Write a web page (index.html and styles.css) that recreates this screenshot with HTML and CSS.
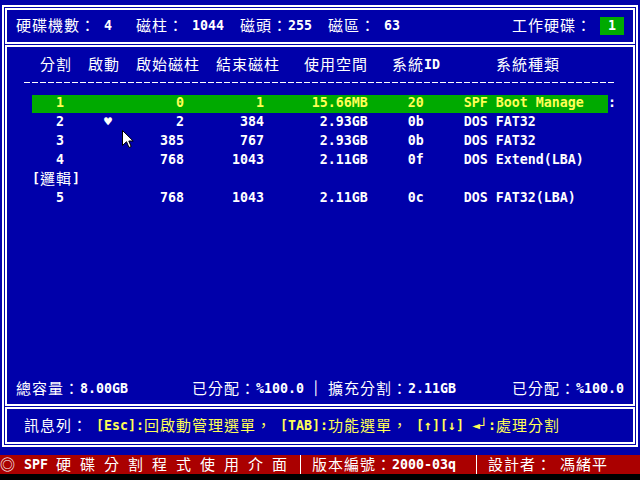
FILE: index.html
```html
<!DOCTYPE html>
<html>
<head>
<meta charset="utf-8">
<title>SPF</title>
<link rel="stylesheet" href="styles.css">
</head>
<body>
<div class="screen">
  <div class="frame">
    <div class="box head">
      <div class="line"> <span class="c">硬碟機數：</span> 4   <span class="c">磁柱：</span> 1044  <span class="c">磁頭：</span>255  <span class="c">磁區：</span> 63              <span class="c">工作硬碟：</span> <span class="disk">1</span></div>
    </div>
    <div class="box main">
      <div class="line cols">    <span class="c">分割</span>  <span class="c">啟動</span>  <span class="c">啟始磁柱</span>  <span class="c">結束磁柱</span>   <span class="c">使用空間</span>   <span class="c">系統</span>ID       <span class="c">系統種類</span></div>
      <div class="rule"></div>
      <div class="rows">
        <div class="sel"><div class="bar">   1              0         1      15.66MB     20     SPF Boot Manage</div><span class="mark">:</span></div>
        <div class="line">      2     ♥        2       384       2.93GB     0b     DOS FAT32</div>
        <div class="line">      3            385       767       2.93GB     0b     DOS FAT32</div>
        <div class="line">      4            768      1043       2.11GB     0f     DOS Extend(LBA)</div>
        <div class="line">   [<span class="c">邏輯</span>]</div>
        <div class="line">      5            768      1043       2.11GB     0c     DOS FAT32(LBA)</div>
      </div>
      <div class="line totals"> <span class="c">總容量：</span>8.00GB        <span class="c">已分配：</span>%100.0 │ <span class="c">擴充分割：</span>2.11GB       <span class="c">已分配：</span>%100.0</div>
    </div>
    <div class="box msg">
      <div class="line">  <span class="c">訊息列：</span><span class="y"> [Esc]:<span class="c">回啟動管理選單，</span> [TAB]:<span class="c">功能選單，</span> [↑][↓] ◄┘:<span class="c">處理分割</span></span></div>
    </div>
  </div>
  <div class="status"><span class="c">◎</span> SPF <span class="c sp">硬碟分割程式使用介面</span><span class="vl"></span> <span class="c">版本編號：</span>2000-03q  <span class="vl"></span> <span class="c">設計者：</span> <span class="c">馮緒平</span></div>
  <div class="black"></div>
  <svg class="cursor" width="12" height="19" viewBox="0 0 12 19"><path d="M0.5 0.5V15.5L4.5 11.7L7 17.5L9.2 16.5L6.8 11H11.2Z" fill="#fff" stroke="#000" stroke-width="1"/></svg>
</div>
</body>
</html>
```

FILE: styles.css
```css
body {
  margin: 0;
  background: #000;
}

.screen {
  width: 640px;
  height: 480px;
  background: #0000aa;
  position: relative;
  overflow: hidden;
  display: flex;
  flex-direction: column;
  font-family: "DejaVu Sans Mono", monospace;
  font-weight: bold;
  font-size: 13.29px;
  color: #fff;
}

.frame {
  box-sizing: border-box;
  margin: 5px 0 0 2px;
  width: 636px;
  height: 442px;
  border: 2px solid #fff;
  padding: 1px;
  display: flex;
  flex-direction: column;
  gap: 1px;
}

.box {
  box-sizing: border-box;
  border: 2px solid #fff;
  padding-left: 1px;
}

.head {
  height: 36px;
  line-height: 32px;
}

.main {
  height: 361px;
  padding-top: 8px;
  display: flex;
  flex-direction: column;
}

.msg {
  height: 37px;
  line-height: 33px;
}

.line {
  white-space: pre;
}

.cols {
  line-height: 19px;
}

.rule {
  margin: 8px 0 0 16px;
  width: 592px;
  height: 1px;
  background: repeating-linear-gradient(90deg, #fff 0 6px, transparent 6px 8px);
}

.rows {
  margin-top: 10px;
  line-height: 19px;
}

.sel {
  display: flex;
  margin: 2px 0 -1px 24px;
  height: 18px;
  line-height: 15px;
}

.bar {
  width: 576px;
  background: #00aa00;
  color: #ffff55;
  white-space: pre;
}

.mark {
  white-space: pre;
}

.totals {
  margin-top: auto;
  margin-bottom: 6px;
  line-height: 19px;
}

.y {
  color: #ffff55;
}

.c {
  font-family: "Noto Sans CJK TC", sans-serif;
  font-weight: 400;
  font-size: 15px;
  letter-spacing: 1px;
  line-height: 1;
  vertical-align: -1px;
}

.sp {
  letter-spacing: 9px;
}

.disk {
  display: inline-block;
  width: 24px;
  height: 18px;
  line-height: 18px;
  text-align: center;
  background: #00aa00;
  vertical-align: middle;
}

.status {
  margin-top: 8px;
  height: 19px;
  line-height: 19px;
  background: #aa0000;
  white-space: pre;
}

.vl {
  display: inline-block;
  width: 8px;
  height: 19px;
  vertical-align: top;
  background: linear-gradient(#fff, #fff) center / 1px 100% no-repeat;
}

.black {
  height: 6px;
  background: #000;
}

.cursor {
  position: absolute;
  left: 122px;
  top: 130px;
}
```
